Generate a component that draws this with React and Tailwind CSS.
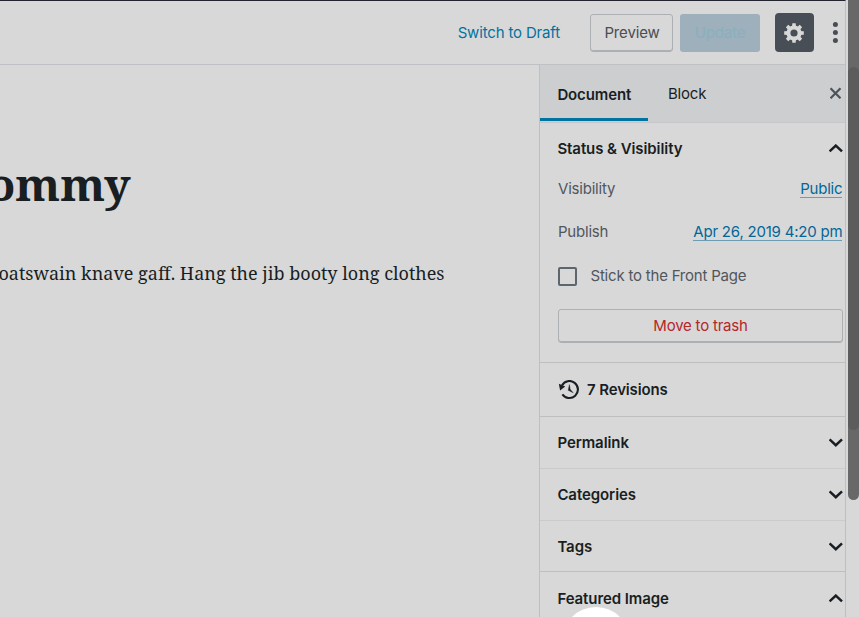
const sans = "font-['Inter','Liberation_Sans',sans-serif]";

function Chevron({ up }) {
  return (
    <svg width="14" height="9" viewBox="0 0 14 9" fill="none" stroke="#191e23" strokeWidth="2.5">
      <path d={up ? "M0.6 7.4L6.8 1.6L13 7.4" : "M0.6 1.4L6.8 7.2L13 1.4"} />
    </svg>
  );
}

function Gear() {
  const teeth = [0, 45, 90, 135, 180, 225, 270, 315];
  return (
    <svg width="20" height="20" viewBox="0 0 20 20">
      <g fill="#d8d8d8">
        {teeth.map((a) => (
          <path key={a} d="M8 5L8.3 0.2H11.7L12 5Z" transform={`rotate(${a} 10 10)`} />
        ))}
      </g>
      <circle cx="10" cy="10" r="5.6" fill="none" stroke="#d8d8d8" strokeWidth="4" />
    </svg>
  );
}

function PanelHead({ title, up, className }) {
  return (
    <div className={`flex items-center justify-between pl-[17.4px] pr-[2px] ${className}`}>
      <h2 className="text-[15px] leading-5 font-semibold tracking-[-0.08px] text-[#191e23]">{title}</h2>
      <Chevron up={up} />
    </div>
  );
}

function Header() {
  return (
    <header className="flex h-16 shrink-0 items-center justify-end border-b border-[#bfc1c4] text-[15px] tracking-[-0.16px]">
      <a className="mr-[30px] pt-px text-[#0073a0]">Switch to Draft</a>
      <button className="mr-[7px] h-[38px] w-[83px] rounded-[3px] border border-[#adb0b2] pt-px pl-px text-[#4b4d50] shadow-[inset_0_-1px_0_#adb0b2]">Preview</button>
      <button className="mr-[15px] h-[38px] w-[80px] rounded-[3px] bg-[#9db0bb] pt-px text-[#8aafc0]">Update</button>
      <button className="mr-[18px] flex h-[39px] w-[39px] items-center justify-center rounded-[4px] bg-[#474e56] pr-[2px]">
        <Gear />
      </button>
      <svg className="mr-[7px]" width="6" height="22" viewBox="0 0 6 22" fill="#474e56">
        <circle cx="3.4" cy="2.5" r="2.5" />
        <circle cx="3.4" cy="10.5" r="2.5" />
        <circle cx="3.4" cy="18.5" r="2.5" />
      </svg>
    </header>
  );
}

function Sidebar() {
  return (
    <aside className="flex w-[306px] shrink-0 flex-col overflow-hidden border-l border-[#bebfc1] text-[15px] leading-5 tracking-[-0.21px]">
      <div className="flex h-[58px] shrink-0 items-start border-b border-[#c5c7ca] bg-[#cdced0] text-[#191e23]">
        <div className="flex h-[56px] w-[108px] items-center border-b-[3px] border-[#0073a0] pt-[6px] pl-[17.4px] font-semibold tracking-[-0.12px]">Document</div>
        <div className="flex h-[56px] flex-1 items-center pt-[2px] pl-[20px]">Block</div>
        <svg className="mt-[22px] mr-[3px]" width="12" height="12" viewBox="0 0 12 12" stroke="#4c535b" strokeWidth="2.2">
          <path d="M0.5 1.3L10.5 11.3M10.5 1.3L0.5 11.3" />
        </svg>
      </div>
      <section className="h-[240px] shrink-0 border-b border-[#bebfc1] text-[#50565c]">
        <PanelHead title="Status & Visibility" up className="h-[51px]" />
        <div className="-mt-px flex h-[32px] items-center justify-between pr-[2.6px] pl-[18px]">
          <span>Visibility</span>
          <a className="border-b border-[#6b9db3] leading-[17px] text-[#006799]">Public</a>
        </div>
        <div className="mt-[11px] flex h-[32px] items-center justify-between pr-[2.6px] pl-[18px]">
          <span>Publish</span>
          <a className="border-b border-[#6b9db3] leading-[17px] text-[#006799]">Apr 26, 2019 4:20 pm</a>
        </div>
        <div className="mt-[18px] flex h-[20px] items-center pl-[18px]">
          <span className="h-[19px] w-[19px] rounded-[2px] border-2 border-[#5b666f]" />
          <span className="ml-[13.5px]">Stick to the Front Page</span>
        </div>
        <button className="mt-[23px] ml-[18px] h-[34px] w-[285px] rounded-[3px] border border-[#adb0b2] text-[#b52727] shadow-[inset_0_-1px_0_#adb0b2]">Move to trash</button>
      </section>
      <section className="flex h-[54px] shrink-0 items-center border-b border-[#bebfc1] pl-[18px] font-semibold tracking-[-0.12px] text-[#191e23]">
        <svg width="22" height="20" viewBox="0 0 22 20" fill="none" stroke="#191e23">
          <path d="M4 5.4A8.5 8.5 0 1 1 4.4 14.3" strokeWidth="2.1" />
          <path d="M0.8 3.8L2.1 10.4L7.2 6.6Z" fill="#191e23" stroke="none" />
          <path d="M11.4 4.6L10.2 10.3L15.2 12.8L12.2 9.3Z" fill="#191e23" strokeWidth="0.4" />
        </svg>
        <span className="ml-[7px]">7 Revisions</span>
      </section>
      <PanelHead title="Permalink" className="h-[52px] shrink-0 border-b border-[#cacbcd]" />
      <PanelHead title="Categories" className="h-[52px] shrink-0 border-b border-[#cacbcd]" />
      <PanelHead title="Tags" className="h-[51px] shrink-0 border-b border-[#bebfc1] pt-px" />
      <PanelHead title="Featured Image" up className="h-[53px] shrink-0" />
    </aside>
  );
}

export default function App() {
  return (
    <div className={`relative flex h-[617px] w-[859px] overflow-hidden bg-[#d8d8d8] ${sans}`}>
      <div className="flex w-[846px] shrink-0 flex-col border-t border-r border-t-[#22232f] border-r-[#bebfc1]">
        <Header />
        <div className="flex min-h-0 flex-1">
          <main className="min-w-0 flex-1 overflow-hidden pt-[86px] font-['Noto_Serif','DejaVu_Serif',serif] whitespace-nowrap text-[#191e23]">
            <h1 className="flex w-[130.5px] justify-end text-[45.5px] leading-[64px] font-bold">ommy</h1>
            <p className="mt-[42px] flex w-[444.5px] justify-end text-[18px] leading-8">oatswain knave gaff. Hang the jib booty long clothes</p>
          </main>
          <Sidebar />
        </div>
      </div>
      <div className="ml-[2px] h-[500px] w-[11px] rounded-b-[6px] bg-[#686868] pt-[67px]">
        <div className="h-[363px] rounded-[6px] bg-[#5c5c5c]" />
      </div>
      <div className="absolute top-[607px] left-[562px] h-[68px] w-[68px] rounded-full bg-white" />
    </div>
  );
}
